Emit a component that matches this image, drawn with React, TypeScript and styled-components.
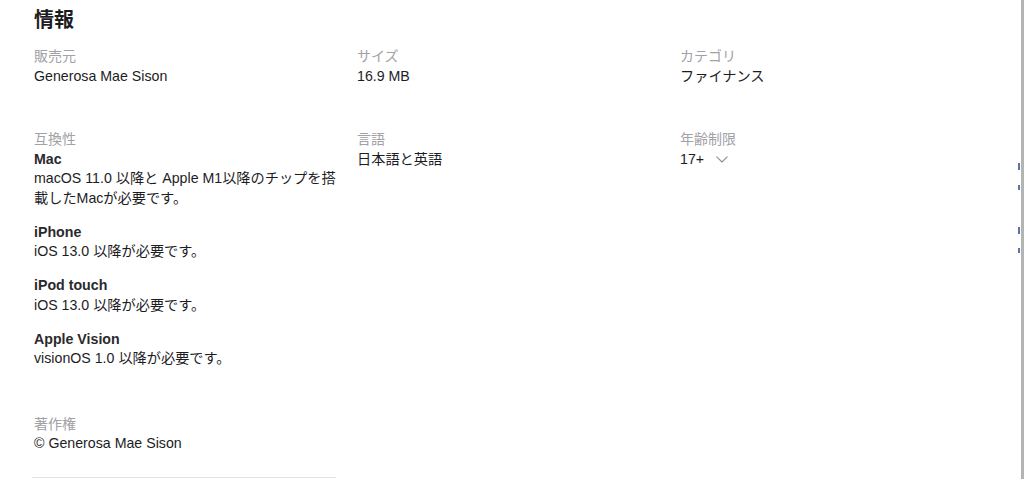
import React from "react";
import styled, { createGlobalStyle } from "styled-components";

const GlobalStyle = createGlobalStyle`
  html, body {
    margin: 0;
    padding: 0;
    background: #ffffff;
  }
  body {
    font-family: "Liberation Sans", "Noto Sans CJK JP", sans-serif;
    color: #1d1d1f;
    -webkit-font-smoothing: antialiased;
  }
`;

const Page = styled.div`
  display: flex;
  width: 1024px;
  height: 479px;
  overflow: hidden;
`;

const Main = styled.main`
  flex: 1;
  padding: 8px 0 0 34px;
`;

const Rail = styled.div`
  position: relative;
  width: 3px;
  background: #b4b4b4;
`;

const Peek = styled.span<{ $top: number; $h: number }>`
  position: absolute;
  left: -3px;
  top: ${(p) => p.$top}px;
  width: 2px;
  height: ${(p) => p.$h}px;
  background: #3d5c99;
  opacity: 0.85;
`;

const Title = styled.h2`
  margin: 0;
  font-size: 20px;
  line-height: 24px;
  font-weight: 700;
  color: #1d1d1f;
`;

const InfoGrid = styled.dl`
  display: grid;
  grid-template-columns: repeat(3, 302px);
  column-gap: 21px;
  row-gap: 44px;
  margin: 15px 0 0 0;
`;

const Item = styled.div<{ $extra?: number }>`
  display: flex;
  flex-direction: column;
  padding-bottom: ${(p) => p.$extra ?? 0}px;
`;

const Label = styled.dt`
  font-size: 14px;
  line-height: 19.5px;
  color: #a1a1a6;
`;

const Value = styled.dd`
  margin: 0;
  font-size: 14.2px;
  line-height: 19.5px;
  color: #1d1d1f;
`;

const DeviceList = styled.dd`
  margin: 0;
  display: flex;
  flex-direction: column;
  gap: 14.5px;
`;

const Device = styled.div`
  font-size: 14.2px;
  line-height: 19.5px;
  color: #1d1d1f;
`;

const DeviceName = styled.div`
  font-weight: 700;
  color: #2a2a2c;
`;

const Requirement = styled.div`
  line-break: strict;
`;

const RatingRow = styled.span`
  display: inline-flex;
  align-items: center;
  gap: 12px;
`;

const Chevron = styled.svg`
  width: 12px;
  height: 7px;
  margin-top: 1px;
`;

const Divider = styled.hr`
  width: 304px;
  margin: 23px 0 0 -2px;
  padding: 0;
  border: none;
  border-top: 1px solid #e3e3e3;
`;

const devices = [
  {
    name: "Mac",
    text: "macOS 11.0 以降と Apple M1以降のチップを搭載したMacが必要です。",
  },
  { name: "iPhone", text: "iOS 13.0 以降が必要です。" },
  { name: "iPod touch", text: "iOS 13.0 以降が必要です。" },
  { name: "Apple Vision", text: "visionOS 1.0 以降が必要です。" },
];

export default function App() {
  return (
    <>
      <GlobalStyle />
      <Page>
        <Main>
          <Title>情報</Title>
          <InfoGrid>
            <Item>
              <Label>販売元</Label>
              <Value>Generosa Mae Sison</Value>
            </Item>
            <Item>
              <Label>サイズ</Label>
              <Value>16.9 MB</Value>
            </Item>
            <Item>
              <Label>カテゴリ</Label>
              <Value>ファイナンス</Value>
            </Item>

            <Item $extra={2}>
              <Label>互換性</Label>
              <DeviceList>
                {devices.map((d) => (
                  <Device key={d.name}>
                    <DeviceName>{d.name}</DeviceName>
                    <Requirement>{d.text}</Requirement>
                  </Device>
                ))}
              </DeviceList>
            </Item>
            <Item>
              <Label>言語</Label>
              <Value>日本語と英語</Value>
            </Item>
            <Item>
              <Label>年齢制限</Label>
              <Value>
                <RatingRow>
                  17+
                  <Chevron viewBox="0 0 12 7" fill="none">
                    <path
                      d="M0.8 0.8 L6 6 L11.2 0.8"
                      stroke="#8e8e93"
                      strokeWidth="1.1"
                      strokeLinecap="round"
                      strokeLinejoin="round"
                    />
                  </Chevron>
                </RatingRow>
              </Value>
            </Item>

            <Item>
              <Label>著作権</Label>
              <Value>© Generosa Mae Sison</Value>
            </Item>
          </InfoGrid>
          <Divider />
        </Main>
        <Rail>
          <Peek $top={163} $h={7} />
          <Peek $top={185} $h={5} />
          <Peek $top={227} $h={7} />
          <Peek $top={248} $h={5} />
        </Rail>
      </Page>
    </>
  );
}
